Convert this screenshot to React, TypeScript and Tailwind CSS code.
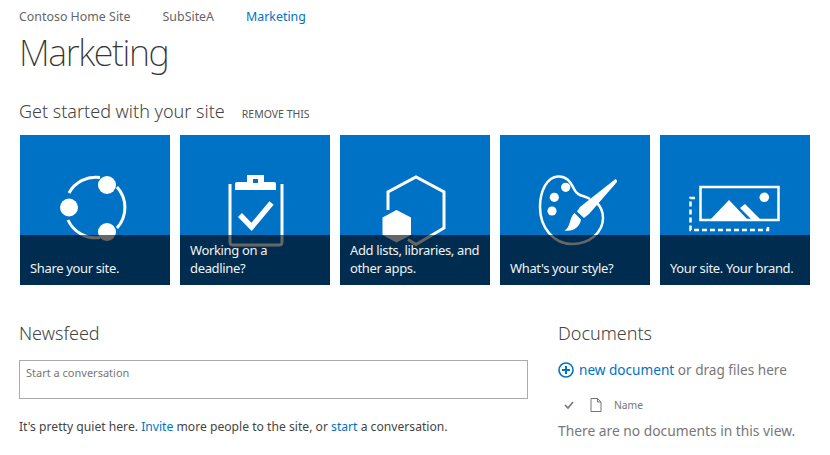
const tiles = [
  { label: "Share your site.", icon: <ShareIcon /> },
  { label: "Working on a deadline?", icon: <ClipboardIcon /> },
  { label: "Add lists, libraries, and other apps.", icon: <AppsIcon /> },
  { label: "What's your style?", icon: <PaletteIcon /> },
  { label: "Your site. Your brand.", icon: <BrandIcon /> },
];

function ShareIcon() {
  return (
    <svg viewBox="0 0 150 150" className="h-full w-full" fill="none">
      <path d="M49 58 A30.5 30.5 0 0 1 80 42.5" stroke="white" strokeWidth="3" />
      <path d="M97 52 A30.5 30.5 0 0 1 97 93" stroke="white" strokeWidth="3" />
      <path d="M48 85 A30.5 30.5 0 0 0 80 102.5" stroke="white" strokeWidth="3" />
      <circle cx="87" cy="50" r="9" fill="white" />
      <circle cx="49" cy="72.5" r="9" fill="white" />
      <circle cx="87" cy="97" r="9" fill="white" />
    </svg>
  );
}

function ClipboardIcon() {
  return (
    <svg viewBox="0 0 150 150" className="h-full w-full" fill="none">
      <path d="M50 49 V107 Q50 110 53 110 H99 Q102 110 102 107 V49" stroke="white" strokeWidth="3" />
      <path
        fillRule="evenodd"
        d="M55 49 Q55 47 57 47 H67 V40 H84 V47 H94 Q96 47 96 49 V55 H55 Z M73 44 V48 H78 V44 Z"
        fill="white"
      />
      <path d="M60 80 L71.5 92 L91.5 68" stroke="white" strokeWidth="5.5" />
    </svg>
  );
}

function AppsIcon() {
  return (
    <svg viewBox="0 0 150 150" className="h-full w-full" fill="none">
      <path d="M48 75 V57 L76 42 L104 57 V93 L76 109.5 L68 104.5" stroke="white" strokeWidth="3" />
      <path d="M56.5 75 L71 82.5 V100 L56.5 107.5 L42.5 100 V82.5 Z" fill="white" />
    </svg>
  );
}

function PaletteIcon() {
  return (
    <svg viewBox="0 0 150 150" className="h-full w-full" fill="none">
      <path
        d="M90 64 C84 60 78 62 74 54 C70 46 66 41 58 41.5 C47 42 40 56 40 72 C40 93 54 109 72 109 C90 109 103 97 103 83 C103 77 101 72 97 68"
        stroke="white"
        strokeWidth="2.5"
      />
      <circle cx="65.7" cy="52.3" r="4.6" fill="white" />
      <circle cx="54.3" cy="62.3" r="4.6" fill="white" />
      <circle cx="52" cy="76" r="4.6" fill="white" />
      <path d="M115.5 44 Q117.5 45 117 47 L89 79 L84 83 L77 76.5 L80 72 Z" fill="white" />
      <path d="M74.5 78 L81 84.5 C80 92 73 97 64.5 95.5 C71 92 69 83 74.5 78 Z" fill="white" />
    </svg>
  );
}

function BrandIcon() {
  return (
    <svg viewBox="0 0 150 150" className="h-full w-full" fill="none">
      <rect x="40.5" y="52" width="78" height="33" stroke="white" strokeWidth="2.5" />
      <circle cx="104.3" cy="62.3" r="4.8" fill="white" />
      <path d="M50 85 L69 65 L88 85 Z" fill="white" />
      <path d="M80 73 L85 69 L101 85 H92 Z" fill="white" />
      <path d="M35 63 H30.5 V95 H108 V91" stroke="white" strokeWidth="2.5" strokeDasharray="5 3" />
    </svg>
  );
}

function Tile({ label, icon }: { label: string; icon: React.ReactNode }) {
  return (
    <div className="relative h-[150px] w-[150px] bg-[#0072c6]">
      {icon}
      <div className="absolute inset-x-0 bottom-0 flex h-[50px] items-end bg-black/60 px-[10px] pb-[8px] text-[13px] leading-[18px] tracking-[-0.35px] text-[#f2f2f2]">
        <span>{label}</span>
      </div>
    </div>
  );
}

export default function App() {
  return (
    <div className="h-[455px] w-[830px] overflow-hidden bg-white pl-[19px] font-['Noto_Sans',sans-serif] text-[#444]">
      <nav className="flex gap-[32px] pt-[8px] text-[12.4px] leading-[17px] text-[#666]">
        <span>Contoso Home Site</span>
        <span>SubSiteA</span>
        <span className="text-[#0072c6]">Marketing</span>
      </nav>
      <h1 className="mt-[6px] text-[36px] leading-[44px] font-extralight tracking-[-1.35px] text-[#333]">Marketing</h1>
      <div className="mt-[23px] flex items-baseline gap-[17px]">
        <h2 className="text-[18px] leading-[26px] font-light">Get started with your site</h2>
        <span className="text-[10.5px] text-[#555]">REMOVE THIS</span>
      </div>
      <div className="mt-[11px] ml-px flex gap-[10px]">
        {tiles.map((t) => (
          <Tile key={t.label} label={t.label} icon={t.icon} />
        ))}
      </div>
      <div className="mt-[35px] flex">
        <section className="w-[509px]">
          <h2 className="text-[18px] leading-[26px] font-light">Newsfeed</h2>
          <div className="mt-[14px] h-[39px] border border-[#ababab] px-[6px] py-[4px] text-[11px] leading-[16px] text-[#777]">
            Start a conversation
          </div>
          <p className="mt-[19px] text-[12.15px] leading-[18px]">
            It's pretty quiet here. <span className="text-[#0072c6]">Invite</span> more people to the site, or{" "}
            <span className="text-[#0072c6]">start</span> a conversation.
          </p>
        </section>
        <section className="ml-[30px] w-[262px]">
          <h2 className="text-[18px] leading-[26px] font-light">Documents</h2>
          <div className="mt-[14px] flex items-center gap-[5px] text-[13.6px] leading-[20px] text-[#777]">
            <svg viewBox="0 0 16 16" className="h-4 w-4" fill="none" stroke="#0072c6">
              <circle cx="8" cy="8" r="7" strokeWidth="1.6" />
              <path d="M8 4 V12 M4 8 H12" strokeWidth="2" />
            </svg>
            <span>
              <span className="text-[#0072c6]">new document</span> or drag files here
            </span>
          </div>
          <div className="mt-[17px] flex items-center text-[10.3px] leading-[16px] text-[#777]">
            <svg viewBox="0 0 10 10" className="ml-[6px] h-[10px] w-[10px]" fill="none" stroke="#777" strokeWidth="1.6">
              <path d="M1 5 L4 8 L9 2" />
            </svg>
            <svg viewBox="0 0 12 14" className="ml-[16px] h-[14px] w-[12px]" fill="none" stroke="#777">
              <path d="M1 .5 H7.5 L11 4 V13.5 H1 Z M7.5 .5 V4 H11" />
            </svg>
            <span className="ml-[12px]">Name</span>
          </div>
          <p className="mt-[8px] text-[13.8px] leading-[20px] text-[#777]">There are no documents in this view.</p>
        </section>
      </div>
    </div>
  );
}
